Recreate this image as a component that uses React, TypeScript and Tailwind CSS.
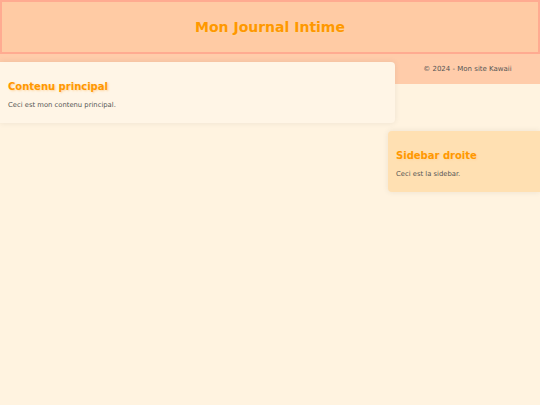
import React from 'react';

const titleShadow = '[text-shadow:1px_1px_2px_#ffd59e]';

export default function App() {
  return (
    <div className="min-h-[405px] bg-[#fff3e0] font-['DejaVu_Sans',Verdana,sans-serif] text-[#555]">
      {/* Header */}
      <header className="h-[54px] border-2 border-[#ffab91] bg-[#ffcba4] flex items-center justify-center">
        <h1 className={`text-[14px] font-bold text-[#ff9800] ${titleShadow}`}>Mon Journal Intime</h1>
      </header>

      {/* Footer strip */}
      <footer className="h-[30px] bg-[#ffccaa] flex items-center justify-end">
        <p className="w-[145px] text-center text-[7px] text-[#555]">© 2024 - Mon site Kawaii</p>
      </footer>

      {/* Main content */}
      <main className="relative -mt-[22px] w-[395px] h-[61px] rounded-r bg-[#fff5e6] shadow-[0_0_6px_rgba(0,0,0,0.08)] px-2 pt-[17px]">
        <h2 className={`text-[10px] font-bold text-[#ff9800] ${titleShadow}`}>Contenu principal</h2>
        <p className="mt-[6px] text-[6.8px]">Ceci est mon contenu principal.</p>
      </main>

      {/* Sidebar */}
      <aside className="ml-auto mt-2 w-[152px] h-[61px] rounded-l bg-[#ffe0b2] shadow-[0_0_6px_rgba(0,0,0,0.08)] px-2 pt-[17px]">
        <h2 className={`text-[10px] font-bold text-[#ff9800] ${titleShadow}`}>Sidebar droite</h2>
        <p className="mt-[6px] text-[6.8px]">Ceci est la sidebar.</p>
      </aside>
    </div>
  );
}
